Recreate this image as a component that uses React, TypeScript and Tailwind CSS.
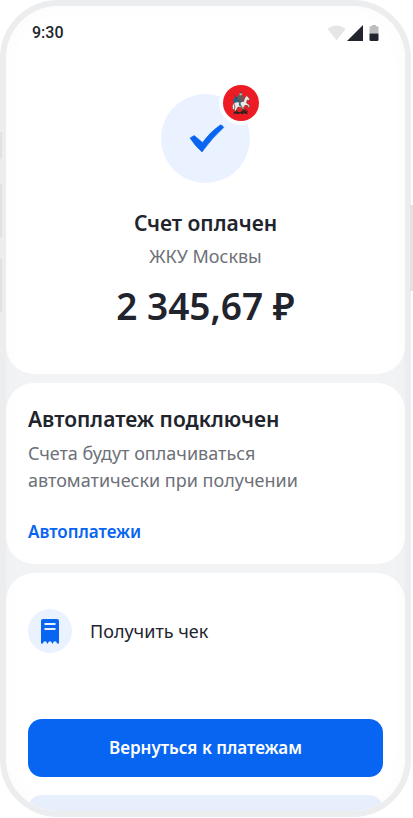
import { useState } from 'react';

interface Bill {
  provider: string;
  amount: number;
}

const bill: Bill = { provider: 'ЖКУ Москвы', amount: 2345.67 };

function formatAmount(value: number) {
  const [whole, cents] = value.toFixed(2).split('.');
  return `${whole.replace(/\B(?=(\d{3})+$)/g, '\u00a0')},${cents}\u00a0₽`;
}

function StatusBar() {
  return (
    <div className="flex h-5 items-center justify-between px-1">
      <span className="font-[Roboto,sans-serif] text-base font-medium">9:30</span>
      <svg width="52" height="18" viewBox="0 0 52 18" aria-hidden="true">
        <path d="M0.5 5C5.5 0.2 13.5 0.2 18.7 5L9.6 16.4Z" fill="#e6e6e6" />
        <path d="M20 17L36 1V17Z" fill="#21242d" />
        <path d="M45 1h4v1.200h1.200q1.300 0 1.300 1.300V9.500h-9V3.500q0-1.300 1.300-1.300h1.200z" fill="#bdbebf" />
        <path d="M42.500 9.500h9v6.200q0 1.300-1.300 1.300h-6.400q-1.300 0-1.300-1.300z" fill="#21242d" />
      </svg>
    </div>
  );
}

// Герб: всадник на белом коне поражает змея
function MoscowBadge() {
  return (
    <svg className="block size-9" viewBox="0 0 36 36" aria-hidden="true">
      <circle cx="18" cy="18" r="18" fill="#ed1c24" />
      <path d="M13 12.500l3-2.500 4 1-1 6-4 1.500-5 .500z" fill="#24719b" />
      <path d="M9.500 16l3-4 2 .500-1.500 4.500z" fill="#1f6489" />
      <path
        d="M10.500 18.500q3-2.500 6.500-1.500l3.500-.500 1.500-4 2-2 1 1.500 1.700 2-1 1.500-1.500-.500-.700 3 2.500 1.500 1 3-1.200.300-1.300-2.300-2.500-.200-1.500 2.500.500 2.500-1.500.200-1-3-3.500-.500-1.500 2.500 1.500 3-1.800.200-1.700-3.200.500-3.500z"
        fill="#eceae6"
        stroke="#493b39"
        strokeWidth="0.500"
      />
      <path d="M11 18.500q-2 1-1.300 5l1.500 1.800.500-4z" fill="#f5f2ee" stroke="#594947" strokeWidth="0.400" />
      <path d="M15.500 10.500l3-.800 2 2.300-1 3.500-3.500 1-1.500-3z" fill="#59605e" />
      <circle cx="17.800" cy="9" r="1.500" fill="#a3a48b" />
      <path d="M17 7.800q1-1.300 2.200 0" stroke="#36434a" fill="none" />
      <path d="M10.500 8.500L22 27" stroke="#4d3d30" strokeWidth="0.700" />
      <path d="M17.500 15.500l-1 4.500 1.500 1" stroke="#2d6584" strokeWidth="1.300" fill="none" />
      <path
        d="M10.500 28q2-3 4-1.500t4.500-.500q2-1.800 3.500.500l2.500-1-1 2 1 1.500h-2l-2-1-1.500 1.500-2-1.200-2.500 1-2-.800-1.500.800z"
        fill="#30211f"
      />
      <path d="M13 25l1.500 1.500M19.500 24l1 2M23 24l-1 2" stroke="#30211f" />
    </svg>
  );
}

function SuccessIcon() {
  return (
    <div className="relative mx-auto size-[89px] rounded-full bg-[#eaf2ff]">
      <svg className="size-full" viewBox="0 0 89 89" aria-hidden="true">
        <path
          d="M29 44L33.200 41.500L41.500 48.500Q49 38 59.200 31Q61.500 30.500 62.700 33.500Q51 44 41 58Q34 52 29 44Z"
          fill="#0765f2"
          stroke="#0765f2"
          strokeWidth="0.600"
          strokeLinejoin="round"
        />
      </svg>
      <div className="absolute -top-[13px] -right-[13px] rounded-full border-4 border-white">
        <MoscowBadge />
      </div>
    </div>
  );
}

function ReceiptIcon() {
  return (
    <span className="flex size-11 shrink-0 items-center justify-center rounded-full bg-[#eaf2ff]">
      <svg width="18" height="25" viewBox="0 0 18 25" aria-hidden="true">
        <path
          d="M2 0h14q2 0 2 2v22.500h-2c-.500-3-3.500-3-4 0h-1c-.500-3-3.500-3-4 0H6c-.500-3-3.500-3-4 0H0V2q0-2 2-2z"
          fill="#0765f2"
        />
        <path d="M3.500 5h11M3.500 10h11" stroke="#eaf2ff" strokeWidth="2" />
      </svg>
    </span>
  );
}

export default function App() {
  const [payment] = useState<Bill>(bill);

  return (
    <div className="relative h-screen bg-white pr-0.5 pb-px font-['Noto_Sans',sans-serif] text-[#21242d]">
      <div className="relative h-full overflow-hidden rounded-[58px] border-6 border-[#ecedef] bg-[#f2f3f5]">
        <main className="flex flex-col gap-[9px]">
          <section className="rounded-b-[28px] bg-white px-[22px] pt-[17px] pb-11 text-center">
            <StatusBar />
            <div className="pt-[51px]">
              <SuccessIcon />
            </div>
            <h1 className="mt-[26px] text-[21px] leading-7 font-semibold">Счет оплачен</h1>
            <p className="mt-[7px] text-lg leading-6 text-[#6d7078]">{payment.provider}</p>
            <p className="mt-3.5 text-[37px] leading-12 font-semibold">{formatAmount(payment.amount)}</p>
          </section>

          <section className="rounded-[28px] bg-white px-[22px] pt-[22px] pb-5">
            <h2 className="text-[21px] leading-7 font-semibold">Автоплатеж подключен</h2>
            <p className="mt-[7px] max-w-xs text-lg leading-[27px] text-[#6d7078]">
              Счета будут оплачиваться автоматически при получении
            </p>
            <a href="#autopay" className="mt-[26px] block text-[17px] leading-6 font-semibold text-[#0765f2]">
              Автоплатежи
            </a>
          </section>

          <section className="rounded-t-[28px] bg-white px-[22px] pt-9 pb-6">
            <button type="button" className="flex w-full items-center gap-[18px] text-left text-lg">
              <ReceiptIcon />
              Получить чек
            </button>
            <button
              type="button"
              className="mt-[66px] h-[58px] w-full rounded-[14px] bg-[#0765f2] text-[17px] font-semibold text-white"
            >
              Вернуться к платежам
            </button>
            <div className="mt-[18px] h-[58px] rounded-[14px] bg-[#e8f0fd]" />
          </section>
        </main>
        {/* Лёгкая тень по краю экрана */}
        <div className="pointer-events-none absolute inset-0 rounded-[52px] shadow-[inset_0_0_22px_rgba(0,0,0,0.02)]" />
      </div>

      {/* Боковые кнопки корпуса */}
      <div className="absolute top-[132px] left-0 h-[27px] w-0.5 bg-[#e2e2e3]" />
      <div className="absolute top-[184px] left-0 h-[53px] w-0.5 bg-[#e2e2e3]" />
      <div className="absolute top-[259px] left-0 h-[53px] w-0.5 bg-[#e2e2e3]" />
      <div className="absolute top-[205px] right-0 h-[86px] w-[3px] bg-[#e2e2e3]" />
    </div>
  );
}
